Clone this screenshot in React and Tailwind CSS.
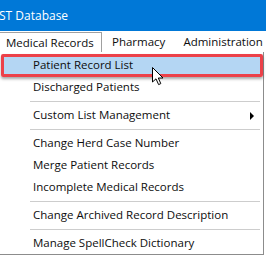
import React from "react";

const Item = ({ children, arrow }) => (
  <div className="h-[22px] flex items-center pl-[33px] pr-[12px] relative">
    <span>{children}</span>
    {arrow && (
      <svg className="absolute left-[250px] top-[8px]" width="5" height="8" viewBox="0 0 5 8">
        <polygon points="0,0 4,4 0,8" fill="#000" />
      </svg>
    )}
  </div>
);

const Sep = () => (
  <div className="h-[6px] flex items-center pl-[30px] pr-[3px]">
    <div className="h-px w-full bg-[#cdcdcd]" />
  </div>
);

export default function App() {
  return (
    <div
      className="w-[266px] h-[255px] overflow-hidden bg-white text-[11.5px] text-[#0d0d0d]"
      style={{ fontFamily: '"Open Sans", "Noto Sans", sans-serif' }}
    >
      <div className="h-[31px] bg-[#0078d7] text-white text-[12px] flex items-center leading-none">
        <span className="-ml-[1px]">ST Database</span>
      </div>
      <div className="h-[21px] flex items-end bg-white">
        <div className="h-[20px] w-[102px] border-t border-r border-[#a0a0a0] bg-white flex items-center pl-[6px]">
          Medical Records
        </div>
        <div className="h-[20px] flex items-center pl-[10px]">Pharmacy</div>
        <div className="h-[20px] flex items-center pl-[18px] whitespace-nowrap">Administration</div>
      </div>
      <div className="relative w-[264px] border-r border-b border-[#8c8c8c] bg-white pt-[2px] pb-0">
        <div className="relative">
          <div className="absolute left-[3px] right-[3px] top-0 h-[20px] bg-[#b4d6f3]" />
          <div className="relative">
            <Item>Patient Record List</Item>
          </div>
        </div>
        <Item>Discharged Patients</Item>
        <Sep />
        <Item arrow>Custom List Management</Item>
        <Sep />
        <Item>Change Herd Case Number</Item>
        <Item>Merge Patient Records</Item>
        <Item>Incomplete Medical Records</Item>
        <Sep />
        <Item>Change Archived Record Description</Item>
        <Sep />
        <Item>Manage SpellCheck Dictionary</Item>

        <div className="absolute left-[1px] top-[2px] w-[262px] h-[23px] border-[3px] border-[#ec4149] rounded-[2px] shadow-[0_2px_3px_rgba(0,0,0,0.35)]" />
        <svg className="absolute left-[151px] top-[14px]" width="14" height="20" viewBox="0 0 14 20">
          <path d="M1.5 1.5 L1.5 16 L5 12.8 L7.6 18.6 L9.8 17.6 L7.3 12 L12 12 Z" fill="#fff" stroke="#000" strokeWidth="1" strokeLinejoin="miter" />
        </svg>
      </div>
    </div>
  );
}
